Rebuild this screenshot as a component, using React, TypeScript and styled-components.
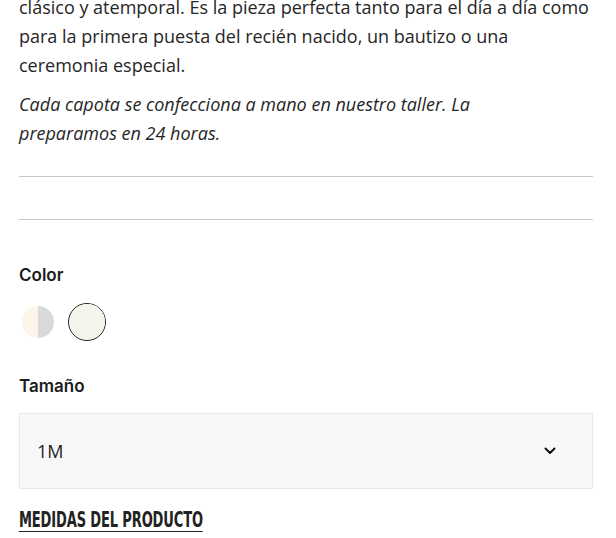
import styled, { createGlobalStyle } from "styled-components";
import { useState } from "react";

const GlobalStyle = createGlobalStyle`
  html, body {
    margin: 0;
    padding: 0;
    background: #ffffff;
  }
  body {
    font-family: "Open Sans", "Noto Sans", sans-serif;
    color: #222222;
    overflow: hidden;
  }
`;

const Page = styled.div`
  padding: 0 23px 0 19px;
  margin-top: -7px;
`;

const Description = styled.p<{ $italic?: boolean }>`
  margin: 0 0 11px;
  font-size: 18px;
  line-height: 28.8px;
  font-style: ${({ $italic }) => ($italic ? "italic" : "normal")};
  color: #262626;
  white-space: nowrap;
`;

const EmptySection = styled.div`
  margin-top: 28px;
  height: 42px;
  border-top: 1px solid #c9c9c9;
  border-bottom: 1px solid #c9c9c9;
`;

const Field = styled.div<{ $top: number }>`
  margin-top: ${({ $top }) => $top}px;
  display: flex;
  flex-direction: column;
`;

const Label = styled.span`
  font-family: "Inter", "Liberation Sans", sans-serif;
  font-weight: 600;
  font-size: 17px;
  color: #1c1c1c;
`;

const Swatches = styled.div`
  display: flex;
  gap: 11px;
  margin-top: 18px;
`;

const Swatch = styled.button<{ $active: boolean; $left: string; $right: string }>`
  width: 38px;
  height: 38px;
  padding: 0;
  border-radius: 50%;
  border: 1.5px solid ${({ $active }) => ($active ? "#222" : "transparent")};
  background: transparent;
  display: flex;
  align-items: center;
  justify-content: center;
  cursor: pointer;

  &::before {
    content: "";
    width: ${({ $active }) => ($active ? "35px" : "32px")};
    height: ${({ $active }) => ($active ? "35px" : "32px")};
    border-radius: 50%;
    background: linear-gradient(
      90deg,
      ${({ $left }) => $left} 50%,
      ${({ $right }) => $right} 50%
    );
  }
`;

const Select = styled.div`
  margin-top: 17px;
  height: 74px;
  border: 1px solid #e9e9eb;
  background: #f7f8fa;
  display: flex;
  align-items: center;
  justify-content: space-between;
  padding: 0 36px 0 17px;
  font-family: "Open Sans", sans-serif;
  font-size: 18px;
  color: #1e1e1e;
  cursor: pointer;
`;

// condensed display heading for the size-guide link
const Measures = styled.a`
  display: inline-block;
  margin-top: 19px;
  font-family: "DejaVu Sans Condensed", "Liberation Sans", sans-serif;
  font-weight: 600;
  font-size: 21px;
  letter-spacing: -0.2px;
  color: #222;
  text-decoration: underline;
  text-decoration-thickness: 3px;
  text-underline-offset: 4px;
  transform: scaleX(0.69);
  transform-origin: left center;
  white-space: nowrap;
  cursor: pointer;
`;

const Chevron = () => (
  <svg width="12" height="8" viewBox="0 0 12 8" fill="none">
    <path d="M1.5 1.5L6 6L10.5 1.5" stroke="#111" strokeWidth="2" strokeLinecap="round" strokeLinejoin="round" />
  </svg>
);

const colors = [
  { left: "#fbf6e8", right: "#d9d9d9" },
  { left: "#f4f4ea", right: "#f4f4ea" },
];

export default function App() {
  const [active, setActive] = useState(1);
  return (
    <Page>
      <GlobalStyle />
      <Description>
        clásico y atemporal. Es la pieza perfecta tanto para el día a día como
        <br />
        para la primera puesta del recién nacido, un bautizo o una
        <br />
        ceremonia especial.
      </Description>
      <Description $italic>
        Cada capota se confecciona a mano en nuestro taller. La
        <br />
        preparamos en 24 horas.
      </Description>
      <EmptySection />
      <Field $top={45}>
        <Label>Color</Label>
        <Swatches>
          {colors.map((c, idx) => (
            <Swatch
              key={idx}
              $active={active === idx}
              $left={c.left}
              $right={c.right}
              onClick={() => setActive(idx)}
            />
          ))}
        </Swatches>
      </Field>
      <Field $top={35}>
        <Label>Tamaño</Label>
        <Select>
          <span>1M</span>
          <Chevron />
        </Select>
      </Field>
      <Measures>MEDIDAS DEL PRODUCTO</Measures>
    </Page>
  );
}
